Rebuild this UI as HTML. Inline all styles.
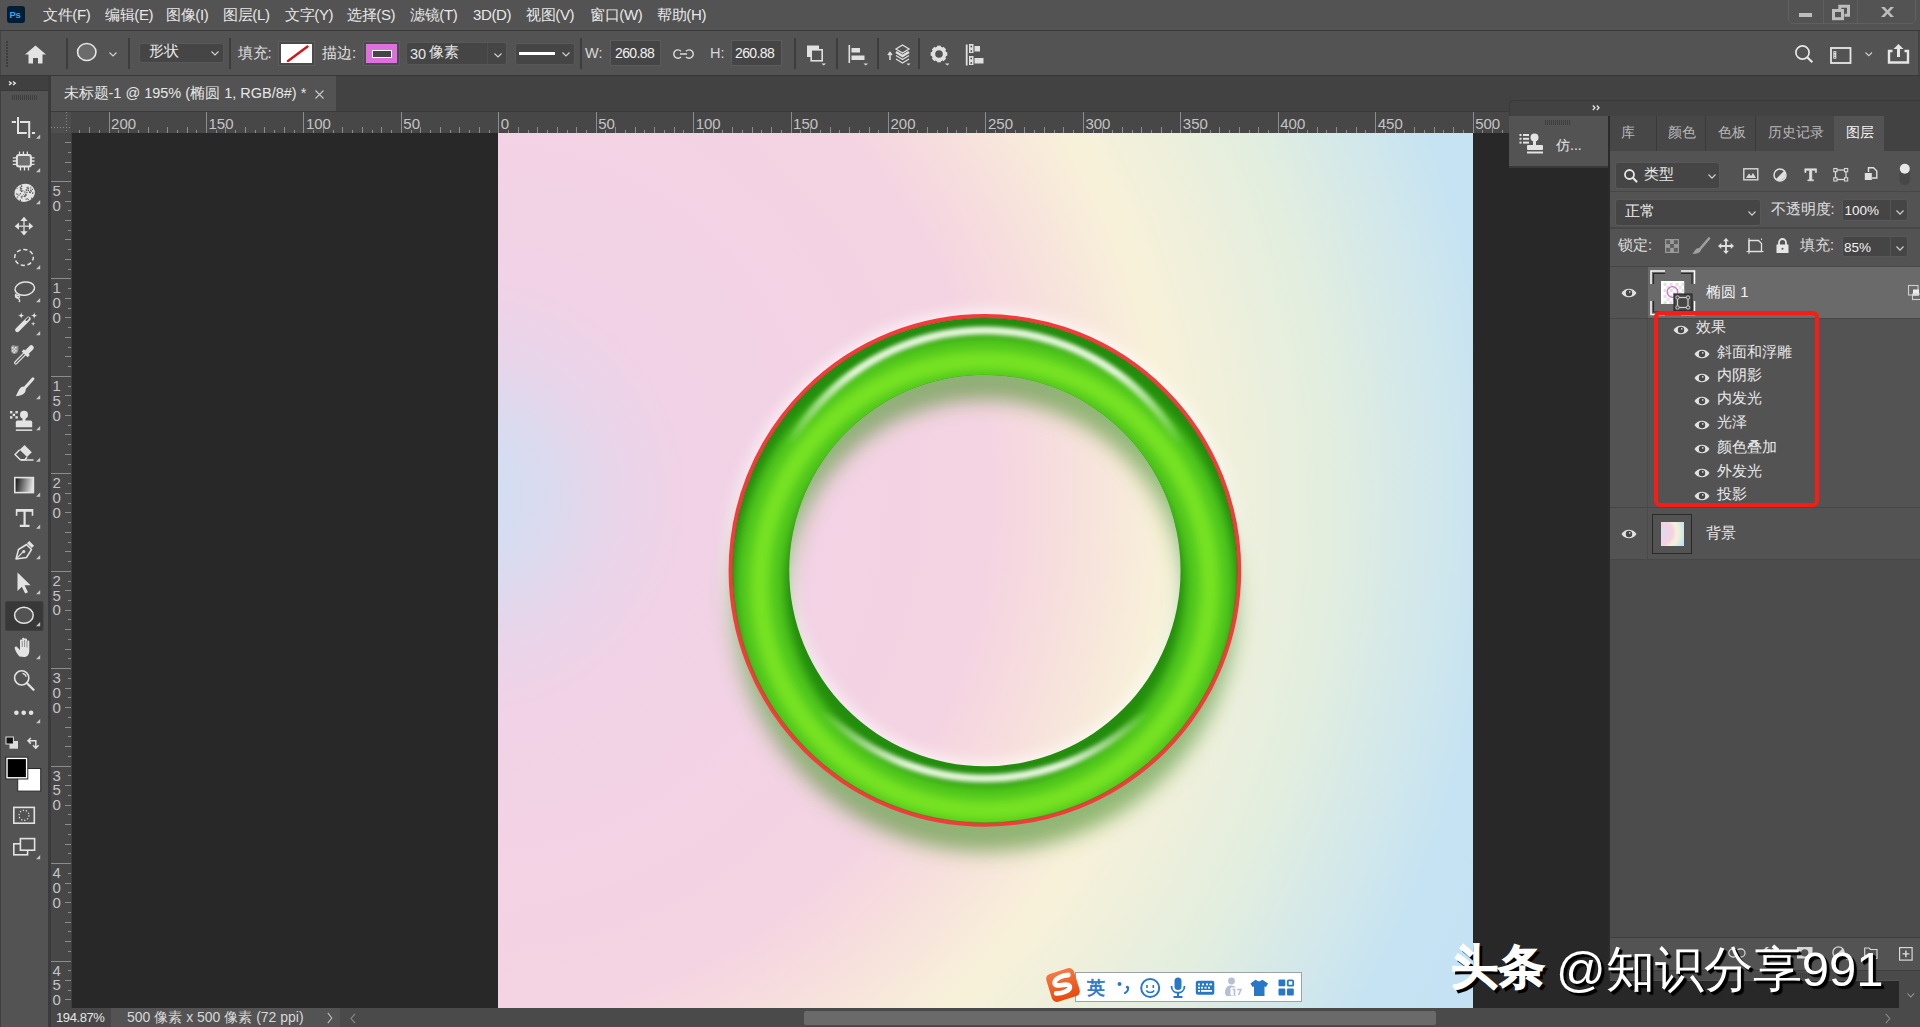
<!DOCTYPE html>
<html><head><meta charset="utf-8"><style>
*{margin:0;padding:0;box-sizing:border-box}
html,body{width:1920px;height:1027px;overflow:hidden;background:#282828;font-family:"Liberation Sans", sans-serif;color:#e6e6e6}
.a{position:absolute}
.t{position:absolute;white-space:nowrap;line-height:1}
svg.i{position:absolute;overflow:visible;left:0;top:0}
</style></head><body>

<div class="a" style="left:0px;top:0px;width:1920px;height:30px;background:#535353;"></div>
<div class="a" style="left:0px;top:30px;width:1920px;height:1px;background:#3a3a3a;"></div>
<div class="a" style="left:7px;top:6px;width:18px;height:17px;background:#001e36;border-radius:3px"></div>
<div class="t" style="left:9.5px;top:10px;font-size:9.5px;color:#31a8ff;font-weight:bold;letter-spacing:-0.3px">Ps</div>
<div class="t" style="left:43px;top:7px;font-size:15px;color:#e8e8e8;letter-spacing:-0.35px">文件(F)</div>
<div class="t" style="left:105px;top:7px;font-size:15px;color:#e8e8e8;letter-spacing:-0.35px">编辑(E)</div>
<div class="t" style="left:166px;top:7px;font-size:15px;color:#e8e8e8;letter-spacing:-0.35px">图像(I)</div>
<div class="t" style="left:223px;top:7px;font-size:15px;color:#e8e8e8;letter-spacing:-0.35px">图层(L)</div>
<div class="t" style="left:285px;top:7px;font-size:15px;color:#e8e8e8;letter-spacing:-0.35px">文字(Y)</div>
<div class="t" style="left:347px;top:7px;font-size:15px;color:#e8e8e8;letter-spacing:-0.35px">选择(S)</div>
<div class="t" style="left:410px;top:7px;font-size:15px;color:#e8e8e8;letter-spacing:-0.35px">滤镜(T)</div>
<div class="t" style="left:473px;top:7px;font-size:15px;color:#e8e8e8;letter-spacing:-0.35px">3D(D)</div>
<div class="t" style="left:526px;top:7px;font-size:15px;color:#e8e8e8;letter-spacing:-0.35px">视图(V)</div>
<div class="t" style="left:590px;top:7px;font-size:15px;color:#e8e8e8;letter-spacing:-0.35px">窗口(W)</div>
<div class="t" style="left:657px;top:7px;font-size:15px;color:#e8e8e8;letter-spacing:-0.35px">帮助(H)</div>
<div class="a" style="left:1788px;top:-3px;width:128px;height:27px;border:1px solid #5f5f5f;border-radius:0 0 5px 5px"></div>
<div class="a" style="left:1823px;top:0px;width:1px;height:24px;background:#5f5f5f;"></div>
<div class="a" style="left:1857px;top:0px;width:1px;height:24px;background:#5f5f5f;"></div>
<div class="a" style="left:1799px;top:13px;width:13px;height:4px;background:#bdbdbd;"></div>
<svg class="i" style="left:1830px;top:3px;" width="22" height="20" viewBox="0 0 22 20"><rect x="3.5" y="7.5" width="9" height="8.2" fill="none" stroke="#bdbdbd" stroke-width="3"/><path d="M9.8 6V3.3H18.5V12.3H14.5" fill="none" stroke="#bdbdbd" stroke-width="3"/></svg>
<svg class="i" style="left:1880px;top:6px;" width="16" height="12" viewBox="0 0 16 12"><path d="M1 1H4.6L7.5 4.3L10.4 1H14L9.3 6L14 11H10.4L7.5 7.7L4.6 11H1L5.7 6Z" fill="#bdbdbd"/></svg>
<div class="a" style="left:0px;top:31px;width:1920px;height:44px;background:#535353;"></div>
<div class="a" style="left:0px;top:31px;width:1px;height:44px;background:#454545;"></div>
<div class="a" style="left:1918px;top:31px;width:2px;height:44px;background:#454545;"></div>
<div class="a" style="left:0px;top:75px;width:1920px;height:1px;background:#383838;"></div>
<div class="a" style="left:6px;top:41px;width:2px;height:1.5px;background:#3c3c3c;"></div>
<div class="a" style="left:6px;top:44px;width:2px;height:1.5px;background:#3c3c3c;"></div>
<div class="a" style="left:6px;top:47px;width:2px;height:1.5px;background:#3c3c3c;"></div>
<div class="a" style="left:6px;top:50px;width:2px;height:1.5px;background:#3c3c3c;"></div>
<div class="a" style="left:6px;top:53px;width:2px;height:1.5px;background:#3c3c3c;"></div>
<div class="a" style="left:6px;top:56px;width:2px;height:1.5px;background:#3c3c3c;"></div>
<div class="a" style="left:6px;top:59px;width:2px;height:1.5px;background:#3c3c3c;"></div>
<div class="a" style="left:6px;top:62px;width:2px;height:1.5px;background:#3c3c3c;"></div>
<div class="a" style="left:6px;top:65px;width:2px;height:1.5px;background:#3c3c3c;"></div>
<svg class="i" style="left:25px;top:45px;" width="22" height="19" viewBox="0 0 22 19"><path d="M10.5 0.5L21 9.5H17.5V18.5H13V13H8V18.5H3.5V9.5H0Z" fill="#e3e3e3"/></svg>
<div class="a" style="left:66px;top:38px;width:1.5px;height:31px;background:#3d3d3d;"></div>
<div class="a" style="left:128px;top:38px;width:1.5px;height:31px;background:#3d3d3d;"></div>
<div class="a" style="left:229px;top:38px;width:1.5px;height:31px;background:#3d3d3d;"></div>
<div class="a" style="left:580px;top:38px;width:1.5px;height:31px;background:#3d3d3d;"></div>
<div class="a" style="left:794px;top:38px;width:1.5px;height:31px;background:#3d3d3d;"></div>
<div class="a" style="left:836px;top:38px;width:1.5px;height:31px;background:#3d3d3d;"></div>
<div class="a" style="left:877px;top:38px;width:1.5px;height:31px;background:#3d3d3d;"></div>
<div class="a" style="left:918px;top:38px;width:1.5px;height:31px;background:#3d3d3d;"></div>
<svg class="i" style="left:76px;top:42px;" width="22" height="21" viewBox="0 0 22 21"><ellipse cx="10.75" cy="10" rx="9.2" ry="8.5" fill="#6b6b6b" stroke="#e6e6e6" stroke-width="1.6"/></svg>
<svg class="i" style="left:109px;top:52.3px;" width="8" height="4.5" viewBox="0 0 8 4.5"><path d="M0.5 0.5L4.0 4.0L7.5 0.5" fill="none" stroke="#d0d0d0" stroke-width="1.2"/></svg>
<div class="a" style="left:138.5px;top:42.5px;width:85px;height:20px;background:#454545;border:1px solid #585858;border-radius:3px"></div>
<div class="t" style="left:148.5px;top:43px;font-size:15px;color:#e8e8e8;">形状</div>
<svg class="i" style="left:211px;top:51px;" width="8" height="4.5" viewBox="0 0 8 4.5"><path d="M0.5 0.5L4.0 4.0L7.5 0.5" fill="none" stroke="#d0d0d0" stroke-width="1.2"/></svg>
<div class="t" style="left:237.5px;top:44.5px;font-size:15px;color:#e0e0e0;">填充:</div>
<div class="a" style="left:278px;top:41px;width:37px;height:24.5px;border:1px solid #5d5d5d;background:#4a4a4a"></div>
<div class="a" style="left:280.5px;top:43.5px;width:31.5px;height:19.5px;background:#ffffff;"></div>
<svg class="i" style="left:280.5px;top:43.5px;" width="32" height="20" viewBox="0 0 32 20"><path d="M7 17L26.5 2.5" stroke="#d01818" stroke-width="2.4" stroke-linecap="round"/></svg>
<div class="t" style="left:322px;top:44.5px;font-size:15px;color:#e0e0e0;">描边:</div>
<div class="a" style="left:363px;top:41px;width:37px;height:24.5px;border:1px solid #5d5d5d;background:#4a4a4a"></div>
<div class="a" style="left:365.5px;top:43.5px;width:31.5px;height:19.5px;background:#dd70dd;"></div>
<div class="a" style="left:371.5px;top:49.5px;width:20px;height:8px;border:1.6px solid #ffffff;background:#454545"></div>
<div class="a" style="left:405.5px;top:42px;width:101px;height:23px;background:#454545;border:1px solid #585858;border-radius:3px"></div>
<div class="a" style="left:487px;top:43px;width:1px;height:21px;background:#4f4f4f;"></div>
<div class="t" style="left:410px;top:47px;font-size:14.5px;color:#e8e8e8;">30</div>
<div class="t" style="left:429px;top:44px;font-size:15px;color:#e8e8e8;">像素</div>
<svg class="i" style="left:494px;top:52.5px;" width="8" height="4.5" viewBox="0 0 8 4.5"><path d="M0.5 0.5L4.0 4.0L7.5 0.5" fill="none" stroke="#d0d0d0" stroke-width="1.2"/></svg>
<div class="a" style="left:514.5px;top:42.5px;width:60px;height:22px;background:#454545;border:1px solid #585858;border-radius:3px"></div>
<div class="a" style="left:518.5px;top:51.8px;width:36.5px;height:3.5px;background:#ffffff;"></div>
<svg class="i" style="left:562px;top:51.5px;" width="8" height="4.5" viewBox="0 0 8 4.5"><path d="M0.5 0.5L4.0 4.0L7.5 0.5" fill="none" stroke="#d0d0d0" stroke-width="1.2"/></svg>
<div class="t" style="left:585px;top:45.5px;font-size:14.5px;color:#d8d8d8;">W:</div>
<div class="a" style="left:610px;top:40px;width:51px;height:25.5px;background:#454545;border:1px solid #5c5c5c"></div>
<div class="t" style="left:615px;top:46px;font-size:14px;color:#f0f0f0;letter-spacing:-0.6px">260.88</div>
<svg class="i" style="left:674px;top:48.5px;" width="19" height="10" viewBox="0 0 19 10"><path d="M7 2.2A4.2 4.2 0 1 0 7 8M12 2.2A4.2 4.2 0 1 1 12 8M6 5H13" fill="none" stroke="#dcdcdc" stroke-width="1.4"/></svg>
<div class="t" style="left:710px;top:45.5px;font-size:14.5px;color:#d8d8d8;">H:</div>
<div class="a" style="left:731px;top:40px;width:51px;height:25.5px;background:#454545;border:1px solid #5c5c5c"></div>
<div class="t" style="left:735px;top:46px;font-size:14px;color:#f0f0f0;letter-spacing:-0.6px">260.88</div>
<svg class="i" style="left:806px;top:45px;" width="22" height="22" viewBox="0 0 22 22"><rect x="1" y="0.5" width="12" height="11.5" fill="#e0e0e0"/><rect x="5.2" y="4.8" width="11" height="11" fill="#535353" stroke="#e0e0e0" stroke-width="1.6"/><path d="M15.5 18.5H20L17.75 20.5Z" fill="#e0e0e0"/></svg>
<svg class="i" style="left:848px;top:45px;" width="22" height="22" viewBox="0 0 22 22"><rect x="0.5" y="0" width="1.6" height="18" fill="#e0e0e0"/><rect x="3.5" y="3" width="8.5" height="4.5" fill="#e0e0e0"/><rect x="3.5" y="10.5" width="13" height="4.5" fill="#e0e0e0"/><path d="M15.5 18.5H20L17.75 20.5Z" fill="#e0e0e0"/></svg>
<svg class="i" style="left:886px;top:43.5px;" width="26" height="24" viewBox="0 0 26 24"><path d="M4 16V9M2 11L4 8.5L6 11" stroke="#e0e0e0" stroke-width="1.5" fill="none"/><path d="M16.5 1L23 5L16.5 9L10 5Z" fill="none" stroke="#e0e0e0" stroke-width="1.3"/><path d="M10 8L16.5 12L23 8" fill="none" stroke="#e0e0e0" stroke-width="2.5"/><path d="M10 11.5L16.5 15.5L23 11.5" fill="none" stroke="#e0e0e0" stroke-width="1.3"/><path d="M10 15L16.5 19L23 15" fill="none" stroke="#e0e0e0" stroke-width="1.3"/><path d="M20.5 19.5H24.5L22.5 21.5Z" fill="#e0e0e0"/></svg>
<svg class="i" style="left:939px;top:54px;left:939px;top:54px" width="20" height="20" viewBox="0 0 20 20"><g transform="translate(0,0)"><rect x="-1.9" y="-8.3" width="3.8" height="4" fill="#e0e0e0" transform="rotate(0)"/><rect x="-1.9" y="-8.3" width="3.8" height="4" fill="#e0e0e0" transform="rotate(45)"/><rect x="-1.9" y="-8.3" width="3.8" height="4" fill="#e0e0e0" transform="rotate(90)"/><rect x="-1.9" y="-8.3" width="3.8" height="4" fill="#e0e0e0" transform="rotate(135)"/><rect x="-1.9" y="-8.3" width="3.8" height="4" fill="#e0e0e0" transform="rotate(180)"/><rect x="-1.9" y="-8.3" width="3.8" height="4" fill="#e0e0e0" transform="rotate(225)"/><rect x="-1.9" y="-8.3" width="3.8" height="4" fill="#e0e0e0" transform="rotate(270)"/><rect x="-1.9" y="-8.3" width="3.8" height="4" fill="#e0e0e0" transform="rotate(315)"/><circle cx="0" cy="0" r="5.6" fill="none" stroke="#e0e0e0" stroke-width="3.6"/><path d="M6 9.5H10.5L8.25 11.5Z" fill="#e0e0e0"/></g></svg>
<svg class="i" style="left:965px;top:43.5px;" width="22" height="23" viewBox="0 0 22 23"><rect x="0.8" y="0.5" width="1.8" height="21" fill="#e0e0e0"/><rect x="4" y="0" width="4.5" height="9" fill="#e0e0e0"/><rect x="4" y="12" width="4.5" height="9" fill="#e0e0e0"/><circle cx="6.25" cy="2.5" r="0.9" fill="#535353"/><circle cx="6.25" cy="7" r="0.9" fill="#535353"/><circle cx="6.25" cy="14.5" r="0.9" fill="#535353"/><circle cx="6.25" cy="19" r="0.9" fill="#535353"/><rect x="9.5" y="2" width="5.5" height="5.5" fill="#e0e0e0"/><rect x="9.5" y="14" width="9" height="5.5" fill="#e0e0e0"/></svg>
<svg class="i" style="left:1795px;top:45px;" width="20" height="20" viewBox="0 0 20 20"><circle cx="7.5" cy="7.5" r="6.6" fill="none" stroke="#e6e6e6" stroke-width="1.7"/><path d="M12.2 12.2L17.3 17.3" stroke="#e6e6e6" stroke-width="2.2"/></svg>
<svg class="i" style="left:1830px;top:46.5px;" width="22" height="18" viewBox="0 0 22 18"><rect x="1" y="1" width="19.5" height="15" fill="none" stroke="#e6e6e6" stroke-width="1.8"/><rect x="3.3" y="4.2" width="3" height="7.5" fill="#e6e6e6"/><circle cx="4.8" cy="5.6" r="0.6" fill="#535353"/><circle cx="4.8" cy="8" r="0.6" fill="#535353"/><circle cx="4.8" cy="10.3" r="0.6" fill="#535353"/></svg>
<svg class="i" style="left:1864.5px;top:51.8px;" width="7.5" height="4.2" viewBox="0 0 7.5 4.2"><path d="M0.5 0.5L3.75 3.7L7.0 0.5" fill="none" stroke="#cfcfcf" stroke-width="1.1"/></svg>
<svg class="i" style="left:1888px;top:43px;" width="22" height="21" viewBox="0 0 22 21"><path d="M4.5 8H1V19.5H20V8H16.5" fill="none" stroke="#e6e6e6" stroke-width="2.4"/><path d="M10.5 1L15.5 6H12V14H9V6H5.5Z" fill="#e6e6e6"/></svg>
<div class="a" style="left:0px;top:76px;width:1920px;height:35px;background:#424242;"></div>
<div class="a" style="left:0px;top:76px;width:48px;height:14px;background:#404040;"></div>
<div class="a" style="left:0px;top:90px;width:48px;height:1px;background:#393939;"></div>
<div class="a" style="left:0px;top:91px;width:48px;height:936px;background:#535353;"></div>
<div class="a" style="left:0px;top:91px;width:1px;height:936px;background:#3f3f3f;"></div>
<div class="a" style="left:48px;top:76px;width:3px;height:951px;background:#3b3b3b;"></div>
<div class="a" style="left:12px;top:95px;width:1px;height:5px;background:#3e3e3e;"></div>
<div class="a" style="left:14px;top:95px;width:1px;height:5px;background:#3e3e3e;"></div>
<div class="a" style="left:16px;top:95px;width:1px;height:5px;background:#3e3e3e;"></div>
<div class="a" style="left:18px;top:95px;width:1px;height:5px;background:#3e3e3e;"></div>
<div class="a" style="left:20px;top:95px;width:1px;height:5px;background:#3e3e3e;"></div>
<div class="a" style="left:22px;top:95px;width:1px;height:5px;background:#3e3e3e;"></div>
<div class="a" style="left:24px;top:95px;width:1px;height:5px;background:#3e3e3e;"></div>
<div class="a" style="left:26px;top:95px;width:1px;height:5px;background:#3e3e3e;"></div>
<div class="a" style="left:28px;top:95px;width:1px;height:5px;background:#3e3e3e;"></div>
<div class="a" style="left:30px;top:95px;width:1px;height:5px;background:#3e3e3e;"></div>
<div class="a" style="left:32px;top:95px;width:1px;height:5px;background:#3e3e3e;"></div>
<div class="a" style="left:34px;top:95px;width:1px;height:5px;background:#3e3e3e;"></div>
<div class="a" style="left:36px;top:95px;width:1px;height:5px;background:#3e3e3e;"></div>
<svg class="i" style="left:0;top:0" width="48" height="1027" viewBox="0 0 48 1027"><path d="M9 81.5L11.3 83.3L9 85.1M13 81.5L15.3 83.3L13 85.1" fill="none" stroke="#e6e6e6" stroke-width="1.3"/><g stroke="#e3e3e3" stroke-width="2" fill="none"><path d="M11.8 122H16M18 117V133H26.8M20 122H29.2V138M31.9 133H35"/></g><path d="M40.2 134.5V138.7H36Z" fill="#c8c8c8"/><rect x="16.9" y="155" width="14" height="11.4" rx="2.2" fill="#6e6e6e" stroke="#e3e3e3" stroke-width="2"/><path d="M19.5 151.5V155M23.4 151.5V155M27.3 151.5V155M20.5 166.5V170.5M24.5 166.5V170.5M28.5 166.5V170.5M12.8 157.8H16.9M12.8 161H16.9M12.8 164.3H16.9M30.9 157.8H34.5M30.9 161H34.5M30.9 164.3H34.5" stroke="#e3e3e3" stroke-width="1.3"/><path d="M40.2 168V172.2H36Z" fill="#c8c8c8"/><clipPath id="osc"><ellipse cx="24.7" cy="192.8" rx="10.4" ry="9" transform="rotate(-12 24.7 192.8)"/></clipPath><ellipse cx="24.7" cy="192.8" rx="10.4" ry="9" transform="rotate(-12 24.7 192.8)" fill="#e3e3e3"/><g clip-path="url(#osc)"><circle cx="20.4" cy="193.7" r="0.58" fill="#535353"/><circle cx="26.5" cy="194.9" r="0.47" fill="#535353"/><circle cx="16.7" cy="198.1" r="0.54" fill="#535353"/><circle cx="20.4" cy="200.4" r="0.61" fill="#535353"/><circle cx="30.3" cy="192.6" r="0.67" fill="#535353"/><circle cx="19.0" cy="195.0" r="0.75" fill="#535353"/><circle cx="25.1" cy="196.6" r="0.68" fill="#535353"/><circle cx="17.6" cy="196.9" r="0.66" fill="#535353"/><circle cx="21.5" cy="186.0" r="0.75" fill="#535353"/><circle cx="24.3" cy="196.3" r="0.76" fill="#535353"/><circle cx="28.3" cy="199.3" r="0.59" fill="#535353"/><circle cx="29.7" cy="192.2" r="0.78" fill="#535353"/><circle cx="31.0" cy="187.0" r="0.50" fill="#535353"/><circle cx="20.1" cy="200.0" r="0.60" fill="#535353"/><circle cx="26.8" cy="190.0" r="0.63" fill="#535353"/><circle cx="22.9" cy="190.8" r="0.65" fill="#535353"/><circle cx="26.1" cy="199.1" r="0.69" fill="#535353"/><circle cx="31.8" cy="198.3" r="0.80" fill="#535353"/><circle cx="27.6" cy="187.9" r="0.75" fill="#535353"/><circle cx="32.4" cy="199.1" r="0.65" fill="#535353"/><circle cx="28.3" cy="188.7" r="0.74" fill="#535353"/><circle cx="26.0" cy="189.8" r="0.47" fill="#535353"/><circle cx="30.6" cy="200.3" r="0.48" fill="#535353"/><circle cx="29.7" cy="191.7" r="0.50" fill="#535353"/><circle cx="21.3" cy="197.0" r="0.76" fill="#535353"/><circle cx="17.2" cy="194.7" r="0.47" fill="#535353"/><circle cx="28.4" cy="190.5" r="0.76" fill="#535353"/><circle cx="32.7" cy="193.1" r="0.80" fill="#535353"/><circle cx="21.6" cy="186.7" r="0.66" fill="#535353"/><circle cx="17.0" cy="188.5" r="0.59" fill="#535353"/><circle cx="26.6" cy="187.8" r="0.46" fill="#535353"/><circle cx="30.8" cy="190.2" r="0.79" fill="#535353"/><circle cx="31.3" cy="191.2" r="0.61" fill="#535353"/><circle cx="25.1" cy="195.2" r="0.66" fill="#535353"/><circle cx="25.7" cy="194.8" r="0.78" fill="#535353"/><circle cx="24.9" cy="192.0" r="0.70" fill="#535353"/><circle cx="20.4" cy="190.0" r="0.79" fill="#535353"/><circle cx="25.1" cy="193.7" r="0.45" fill="#535353"/><circle cx="23.4" cy="194.2" r="0.46" fill="#535353"/><circle cx="26.7" cy="195.0" r="0.47" fill="#535353"/><circle cx="26.9" cy="192.5" r="0.69" fill="#535353"/><circle cx="22.3" cy="196.1" r="0.71" fill="#535353"/><circle cx="16.9" cy="186.4" r="0.69" fill="#535353"/><circle cx="32.4" cy="189.3" r="0.61" fill="#535353"/><circle cx="26.3" cy="190.3" r="0.58" fill="#535353"/><circle cx="21.7" cy="191.0" r="0.66" fill="#535353"/><circle cx="21.5" cy="191.2" r="0.72" fill="#535353"/><circle cx="16.9" cy="194.0" r="0.71" fill="#535353"/><circle cx="21.6" cy="188.8" r="0.73" fill="#535353"/><circle cx="20.4" cy="188.3" r="0.60" fill="#535353"/><circle cx="28.0" cy="187.0" r="0.56" fill="#535353"/><circle cx="22.0" cy="198.0" r="0.60" fill="#535353"/><circle cx="30.6" cy="188.0" r="0.57" fill="#535353"/><circle cx="27.2" cy="198.8" r="0.61" fill="#535353"/><circle cx="20.2" cy="187.3" r="0.64" fill="#535353"/></g><path d="M40.2 200V204.2H36Z" fill="#c8c8c8"/><path d="M24 219V233M17 226.2H31" stroke="#c9c9c9" stroke-width="1.6"/><path d="M24 216.7L27.6 221H20.4ZM24 235.6L27.6 231.3H20.4ZM14.7 226.2L19 222.6V229.8ZM33.2 226.2L28.9 222.6V229.8Z" fill="#e3e3e3"/><ellipse cx="24" cy="257.4" rx="9.3" ry="8" fill="none" stroke="#e3e3e3" stroke-width="1.5" stroke-dasharray="4.2 2.6" stroke-dashoffset="1"/><path d="M40.2 265V269.2H36Z" fill="#c8c8c8"/><ellipse cx="24.8" cy="288.6" rx="9.8" ry="6.6" fill="none" stroke="#e3e3e3" stroke-width="1.5" transform="rotate(-8 24.8 288.6)"/><path d="M16.5 293.5C14 296 16 298.5 18.5 297.8C20.5 297 19 294.5 17 295.5C15.5 296.5 18.5 298.5 19.3 299.6C20 300.5 19.5 301.5 19 302" fill="none" stroke="#e3e3e3" stroke-width="1.4"/><path d="M40.2 298V302.2H36Z" fill="#c8c8c8"/><path d="M17.3 330L28.5 318.8" stroke="#e3e3e3" stroke-width="4.4" stroke-linecap="round"/><path d="M26.4 320.1L28.3 318.2" stroke="#535353" stroke-width="1.8" stroke-linecap="round"/><path d="M21.2 311.9Q21.2 315.4 24.7 315.4Q21.2 315.4 21.2 318.9Q21.2 315.4 17.7 315.4Q21.2 315.4 21.2 311.9Z" fill="#e3e3e3"/><path d="M34.2 311.9Q34.2 315.4 37.7 315.4Q34.2 315.4 34.2 318.9Q34.2 315.4 30.700000000000003 315.4Q34.2 315.4 34.2 311.9Z" fill="#e3e3e3"/><path d="M33.2 321.4Q33.2 323.7 35.5 323.7Q33.2 323.7 33.2 326.0Q33.2 323.7 30.900000000000002 323.7Q33.2 323.7 33.2 321.4Z" fill="#e3e3e3"/><path d="M40.2 331V335.2H36Z" fill="#c8c8c8"/><path d="M11 346.5L13 345L16 346L18.3 345.5V350C18.3 352.5 16 354 14 354C12 353.5 11 352 11 350Z" fill="#9a9a9a"/><g fill="#e3e3e3"><rect x="12" y="347" width="1.5" height="1.5"/><rect x="15" y="347" width="1.5" height="1.5"/><rect x="13.5" y="348.5" width="1.5" height="1.5"/><rect x="12" y="350" width="1.5" height="1.5"/><rect x="15" y="350" width="1.5" height="1.5"/><rect x="13.5" y="351.5" width="1.5" height="1.5"/></g><path d="M15.8 362.8L25.5 353" stroke="#e3e3e3" stroke-width="3.6" stroke-linecap="round"/><path d="M15.8 362.8L25.5 353" stroke="#535353" stroke-width="1.2" stroke-linecap="round"/><path d="M22.8 350.3L28.7 356.2" stroke="#e3e3e3" stroke-width="3.2"/><path d="M27 352L31.3 347.7" stroke="#e3e3e3" stroke-width="5" stroke-linecap="round"/><path d="M33 378.8L24.5 388.3" stroke="#e3e3e3" stroke-width="2.8" stroke-linecap="round"/><path d="M23.6 386.5C19.6 386.7 18.8 390.5 15.8 396.3C20 396 25.5 394.5 25.8 389.5Z" fill="#e3e3e3"/><path d="M40.2 395V399.2H36Z" fill="#c8c8c8"/><g fill="#e3e3e3"><rect x="10" y="411" width="2.4" height="2.4"/><rect x="15.4" y="411" width="2.4" height="2.4"/><rect x="12.7" y="413.7" width="2.4" height="2.4"/><rect x="10" y="416.2" width="2.4" height="2.4"/><rect x="15.4" y="416.2" width="2.4" height="2.4"/><circle cx="24" cy="414.8" r="4"/><rect x="22.5" y="417.5" width="3" height="4"/><path d="M17.5 420.5H30.5Q32.2 420.5 32.2 422.3V427.3H15.8V422.3Q15.8 420.5 17.5 420.5Z"/><rect x="15.8" y="429.4" width="16.4" height="1.5"/></g><path d="M40.2 426V430.2H36Z" fill="#c8c8c8"/><path d="M24.5 445L31.8 452.3L27 457L19.7 449.8Z" fill="#e3e3e3"/><path d="M19.7 449.8L15 454.5L20.3 459.8H25L27 457" fill="none" stroke="#e3e3e3" stroke-width="1.5" stroke-linejoin="round"/><path d="M21 460H33.5" stroke="#e3e3e3" stroke-width="1.5"/><path d="M40.2 457.5V461.7H36Z" fill="#c8c8c8"/><defs><linearGradient id="gr" x1="0" x2="1" y1="0" y2="0.15"><stop offset="0" stop-color="#0a0a0a"/><stop offset="1" stop-color="#dedede"/></linearGradient></defs><rect x="14.8" y="477.6" width="18.6" height="15" fill="url(#gr)" stroke="#e3e3e3" stroke-width="1.6"/><path d="M40.2 492.5V496.7H36Z" fill="#c8c8c8"/><path d="M16.6 515.8V509.8H32.5V515.8" fill="none" stroke="#e3e3e3" stroke-width="1.6"/><path d="M16.6 510.5H32.5" stroke="#e3e3e3" stroke-width="2.6"/><path d="M24.6 510V526M19.8 525.8H29.5" stroke="#e3e3e3" stroke-width="2.2"/><path d="M40.2 524.5V528.7H36Z" fill="#c8c8c8"/><path d="M16 559L18.5 549.5L26.5 544.5L31.5 549.5L26.5 557.5Z" fill="none" stroke="#e3e3e3" stroke-width="1.5" stroke-linejoin="round"/><path d="M27 543.2L29.3 541L34.1 545.8L31.8 548.1Z" fill="#e3e3e3"/><path d="M16.5 558.5L23.3 551.7" stroke="#e3e3e3" stroke-width="1.1"/><circle cx="23.8" cy="551.4" r="1.5" fill="#e3e3e3"/><path d="M40.2 555V559.2H36Z" fill="#c8c8c8"/><path d="M17.5 572.5V591L21.8 586.8L25.2 593.6L28 592.2L24.6 585.3H30.6Z" fill="#e3e3e3"/><path d="M40.2 590V594.2H36Z" fill="#c8c8c8"/><rect x="5.5" y="601.5" width="37.5" height="29" rx="1.5" fill="#383838" stroke="#3f3f3f" stroke-width="1"/><ellipse cx="23.9" cy="615.3" rx="9.3" ry="8" fill="#535353" stroke="#e3e3e3" stroke-width="1.5"/><path d="M40.2 622V626.2H36Z" fill="#c8c8c8"/><path d="M19.5 656.5C17 654 15.5 651 14.8 648.5C14.3 647 15.8 646 17 647L20 650V640.5C20 639 22.2 639 22.2 640.5V647.5V638.8C22.2 637.5 24.6 637.5 24.6 638.8V647.5V639.5C24.6 638.2 27 638.2 27 639.5V648V641.5C27 640.2 29.3 640.2 29.3 641.5V650.5C29.3 654.5 27.5 657 24 657Z" fill="#e3e3e3"/><path d="M22.2 641V647M24.6 640V647M27 641V647.5" stroke="#535353" stroke-width="0.6"/><path d="M40.2 655V659.2H36Z" fill="#c8c8c8"/><circle cx="21.7" cy="677.9" r="7.1" fill="none" stroke="#e3e3e3" stroke-width="1.6"/><path d="M26.8 683L33.5 689.7" stroke="#e3e3e3" stroke-width="2.3" stroke-linecap="round"/><path d="M22.5 673.3A4.5 4.5 0 0 1 26.2 676.8" fill="none" stroke="#e3e3e3" stroke-width="1.2"/><circle cx="16.4" cy="712.8" r="2.3" fill="#e3e3e3"/><circle cx="23.7" cy="712.8" r="2.3" fill="#e3e3e3"/><circle cx="31.1" cy="712.8" r="2.3" fill="#e3e3e3"/><path d="M40.2 719V723.2H36Z" fill="#c8c8c8"/><rect x="9.5" y="741" width="8.5" height="7.7" fill="#dedede"/><rect x="6" y="737" width="7.4" height="7" fill="#111" stroke="#dedede" stroke-width="1"/><path d="M28.5 740.8H35.8V748M30.8 738L28 740.8L30.8 743.6M33 745.3L35.8 748.2L38.6 745.3" fill="none" stroke="#e3e3e3" stroke-width="1.5"/><rect x="17.7" y="768.5" width="23" height="22.6" fill="#ffffff" stroke="#2a2a2a" stroke-width="1"/><rect x="5.8" y="757.2" width="22" height="21.8" fill="#000" stroke="#2a2a2a" stroke-width="1"/><rect x="7" y="758.4" width="19.6" height="19.4" fill="#000" stroke="#ffffff" stroke-width="1.4"/><rect x="13.8" y="807.4" width="20.5" height="15.8" fill="none" stroke="#e3e3e3" stroke-width="1.6"/><circle cx="24" cy="815.3" r="5" fill="none" stroke="#e3e3e3" stroke-width="1.2" stroke-dasharray="1.3 1.8"/><rect x="13.8" y="843.8" width="13.8" height="11" fill="#535353" stroke="#e3e3e3" stroke-width="1.6"/><rect x="20.4" y="838.6" width="14.2" height="11.6" fill="#535353" stroke="#e3e3e3" stroke-width="1.6"/><path d="M40.2 855V859.2H36Z" fill="#c8c8c8"/></svg>
<div class="a" style="left:51px;top:76px;width:285px;height:35px;background:#535353;"></div>
<div class="t" style="left:63.5px;top:86px;font-size:14.5px;color:#e6e6e6;">未标题-1 @ 195% (椭圆 1, RGB/8#) *</div>
<svg class="i" style="left:315px;top:90px;" width="9" height="9" viewBox="0 0 9 9"><path d="M0.5 0.5L8.5 8.5M8.5 0.5L0.5 8.5" stroke="#c8c8c8" stroke-width="1.1"/></svg>
<div class="a" style="left:51px;top:111px;width:1869px;height:1px;background:#3b3b3b;"></div>
<div class="a" style="left:51px;top:112px;width:1458px;height:21px;background:#474747;"></div>
<div class="a" style="left:51px;top:112px;width:20px;height:21px;background:#4e4e4e;"></div>
<svg class="i" style="left:51px;top:112px;" width="20" height="21" viewBox="0 0 20 21"><path d="M15.5 0V21" stroke="#8a8a8a" stroke-width="1" stroke-dasharray="1 2"/><path d="M0 15.5H20" stroke="#8a8a8a" stroke-width="1" stroke-dasharray="1 2"/></svg>
<div class="a" style="left:51px;top:133px;width:20px;height:875px;background:#474747;"></div>
<div class="a" style="left:71px;top:133px;width:1px;height:875px;background:#3e3e3e;"></div>
<svg class="i" style="left:72px;top:112px;" width="1436" height="21" viewBox="0 0 1436 21"><rect x="7" y="18" width="1" height="3" fill="#8c8c8c"/><rect x="17" y="15" width="1" height="6" fill="#8c8c8c"/><rect x="27" y="18" width="1" height="3" fill="#8c8c8c"/><rect x="37" y="0" width="1" height="21" fill="#8c8c8c"/><rect x="46" y="18" width="1" height="3" fill="#8c8c8c"/><rect x="56" y="15" width="1" height="6" fill="#8c8c8c"/><rect x="66" y="18" width="1" height="3" fill="#8c8c8c"/><rect x="76" y="15" width="1" height="6" fill="#8c8c8c"/><rect x="85" y="18" width="1" height="3" fill="#8c8c8c"/><rect x="95" y="15" width="1" height="6" fill="#8c8c8c"/><rect x="105" y="18" width="1" height="3" fill="#8c8c8c"/><rect x="115" y="15" width="1" height="6" fill="#8c8c8c"/><rect x="124" y="18" width="1" height="3" fill="#8c8c8c"/><rect x="134" y="0" width="1" height="21" fill="#8c8c8c"/><rect x="144" y="18" width="1" height="3" fill="#8c8c8c"/><rect x="153" y="15" width="1" height="6" fill="#8c8c8c"/><rect x="163" y="18" width="1" height="3" fill="#8c8c8c"/><rect x="173" y="15" width="1" height="6" fill="#8c8c8c"/><rect x="183" y="18" width="1" height="3" fill="#8c8c8c"/><rect x="192" y="15" width="1" height="6" fill="#8c8c8c"/><rect x="202" y="18" width="1" height="3" fill="#8c8c8c"/><rect x="212" y="15" width="1" height="6" fill="#8c8c8c"/><rect x="222" y="18" width="1" height="3" fill="#8c8c8c"/><rect x="231" y="0" width="1" height="21" fill="#8c8c8c"/><rect x="241" y="18" width="1" height="3" fill="#8c8c8c"/><rect x="251" y="15" width="1" height="6" fill="#8c8c8c"/><rect x="261" y="18" width="1" height="3" fill="#8c8c8c"/><rect x="270" y="15" width="1" height="6" fill="#8c8c8c"/><rect x="280" y="18" width="1" height="3" fill="#8c8c8c"/><rect x="290" y="15" width="1" height="6" fill="#8c8c8c"/><rect x="300" y="18" width="1" height="3" fill="#8c8c8c"/><rect x="309" y="15" width="1" height="6" fill="#8c8c8c"/><rect x="319" y="18" width="1" height="3" fill="#8c8c8c"/><rect x="329" y="0" width="1" height="21" fill="#8c8c8c"/><rect x="339" y="18" width="1" height="3" fill="#8c8c8c"/><rect x="348" y="15" width="1" height="6" fill="#8c8c8c"/><rect x="358" y="18" width="1" height="3" fill="#8c8c8c"/><rect x="368" y="15" width="1" height="6" fill="#8c8c8c"/><rect x="378" y="18" width="1" height="3" fill="#8c8c8c"/><rect x="387" y="15" width="1" height="6" fill="#8c8c8c"/><rect x="397" y="18" width="1" height="3" fill="#8c8c8c"/><rect x="407" y="15" width="1" height="6" fill="#8c8c8c"/><rect x="417" y="18" width="1" height="3" fill="#8c8c8c"/><rect x="426" y="0" width="1" height="21" fill="#8c8c8c"/><rect x="436" y="18" width="1" height="3" fill="#8c8c8c"/><rect x="446" y="15" width="1" height="6" fill="#8c8c8c"/><rect x="456" y="18" width="1" height="3" fill="#8c8c8c"/><rect x="465" y="15" width="1" height="6" fill="#8c8c8c"/><rect x="475" y="18" width="1" height="3" fill="#8c8c8c"/><rect x="485" y="15" width="1" height="6" fill="#8c8c8c"/><rect x="495" y="18" width="1" height="3" fill="#8c8c8c"/><rect x="504" y="15" width="1" height="6" fill="#8c8c8c"/><rect x="514" y="18" width="1" height="3" fill="#8c8c8c"/><rect x="524" y="0" width="1" height="21" fill="#8c8c8c"/><rect x="533" y="18" width="1" height="3" fill="#8c8c8c"/><rect x="543" y="15" width="1" height="6" fill="#8c8c8c"/><rect x="553" y="18" width="1" height="3" fill="#8c8c8c"/><rect x="563" y="15" width="1" height="6" fill="#8c8c8c"/><rect x="572" y="18" width="1" height="3" fill="#8c8c8c"/><rect x="582" y="15" width="1" height="6" fill="#8c8c8c"/><rect x="592" y="18" width="1" height="3" fill="#8c8c8c"/><rect x="602" y="15" width="1" height="6" fill="#8c8c8c"/><rect x="611" y="18" width="1" height="3" fill="#8c8c8c"/><rect x="621" y="0" width="1" height="21" fill="#8c8c8c"/><rect x="631" y="18" width="1" height="3" fill="#8c8c8c"/><rect x="641" y="15" width="1" height="6" fill="#8c8c8c"/><rect x="650" y="18" width="1" height="3" fill="#8c8c8c"/><rect x="660" y="15" width="1" height="6" fill="#8c8c8c"/><rect x="670" y="18" width="1" height="3" fill="#8c8c8c"/><rect x="680" y="15" width="1" height="6" fill="#8c8c8c"/><rect x="689" y="18" width="1" height="3" fill="#8c8c8c"/><rect x="699" y="15" width="1" height="6" fill="#8c8c8c"/><rect x="709" y="18" width="1" height="3" fill="#8c8c8c"/><rect x="719" y="0" width="1" height="21" fill="#8c8c8c"/><rect x="728" y="18" width="1" height="3" fill="#8c8c8c"/><rect x="738" y="15" width="1" height="6" fill="#8c8c8c"/><rect x="748" y="18" width="1" height="3" fill="#8c8c8c"/><rect x="758" y="15" width="1" height="6" fill="#8c8c8c"/><rect x="767" y="18" width="1" height="3" fill="#8c8c8c"/><rect x="777" y="15" width="1" height="6" fill="#8c8c8c"/><rect x="787" y="18" width="1" height="3" fill="#8c8c8c"/><rect x="797" y="15" width="1" height="6" fill="#8c8c8c"/><rect x="806" y="18" width="1" height="3" fill="#8c8c8c"/><rect x="816" y="0" width="1" height="21" fill="#8c8c8c"/><rect x="826" y="18" width="1" height="3" fill="#8c8c8c"/><rect x="836" y="15" width="1" height="6" fill="#8c8c8c"/><rect x="845" y="18" width="1" height="3" fill="#8c8c8c"/><rect x="855" y="15" width="1" height="6" fill="#8c8c8c"/><rect x="865" y="18" width="1" height="3" fill="#8c8c8c"/><rect x="875" y="15" width="1" height="6" fill="#8c8c8c"/><rect x="884" y="18" width="1" height="3" fill="#8c8c8c"/><rect x="894" y="15" width="1" height="6" fill="#8c8c8c"/><rect x="904" y="18" width="1" height="3" fill="#8c8c8c"/><rect x="913" y="0" width="1" height="21" fill="#8c8c8c"/><rect x="923" y="18" width="1" height="3" fill="#8c8c8c"/><rect x="933" y="15" width="1" height="6" fill="#8c8c8c"/><rect x="943" y="18" width="1" height="3" fill="#8c8c8c"/><rect x="952" y="15" width="1" height="6" fill="#8c8c8c"/><rect x="962" y="18" width="1" height="3" fill="#8c8c8c"/><rect x="972" y="15" width="1" height="6" fill="#8c8c8c"/><rect x="982" y="18" width="1" height="3" fill="#8c8c8c"/><rect x="991" y="15" width="1" height="6" fill="#8c8c8c"/><rect x="1001" y="18" width="1" height="3" fill="#8c8c8c"/><rect x="1011" y="0" width="1" height="21" fill="#8c8c8c"/><rect x="1021" y="18" width="1" height="3" fill="#8c8c8c"/><rect x="1030" y="15" width="1" height="6" fill="#8c8c8c"/><rect x="1040" y="18" width="1" height="3" fill="#8c8c8c"/><rect x="1050" y="15" width="1" height="6" fill="#8c8c8c"/><rect x="1060" y="18" width="1" height="3" fill="#8c8c8c"/><rect x="1069" y="15" width="1" height="6" fill="#8c8c8c"/><rect x="1079" y="18" width="1" height="3" fill="#8c8c8c"/><rect x="1089" y="15" width="1" height="6" fill="#8c8c8c"/><rect x="1099" y="18" width="1" height="3" fill="#8c8c8c"/><rect x="1108" y="0" width="1" height="21" fill="#8c8c8c"/><rect x="1118" y="18" width="1" height="3" fill="#8c8c8c"/><rect x="1128" y="15" width="1" height="6" fill="#8c8c8c"/><rect x="1138" y="18" width="1" height="3" fill="#8c8c8c"/><rect x="1147" y="15" width="1" height="6" fill="#8c8c8c"/><rect x="1157" y="18" width="1" height="3" fill="#8c8c8c"/><rect x="1167" y="15" width="1" height="6" fill="#8c8c8c"/><rect x="1177" y="18" width="1" height="3" fill="#8c8c8c"/><rect x="1186" y="15" width="1" height="6" fill="#8c8c8c"/><rect x="1196" y="18" width="1" height="3" fill="#8c8c8c"/><rect x="1206" y="0" width="1" height="21" fill="#8c8c8c"/><rect x="1216" y="18" width="1" height="3" fill="#8c8c8c"/><rect x="1225" y="15" width="1" height="6" fill="#8c8c8c"/><rect x="1235" y="18" width="1" height="3" fill="#8c8c8c"/><rect x="1245" y="15" width="1" height="6" fill="#8c8c8c"/><rect x="1254" y="18" width="1" height="3" fill="#8c8c8c"/><rect x="1264" y="15" width="1" height="6" fill="#8c8c8c"/><rect x="1274" y="18" width="1" height="3" fill="#8c8c8c"/><rect x="1284" y="15" width="1" height="6" fill="#8c8c8c"/><rect x="1293" y="18" width="1" height="3" fill="#8c8c8c"/><rect x="1303" y="0" width="1" height="21" fill="#8c8c8c"/><rect x="1313" y="18" width="1" height="3" fill="#8c8c8c"/><rect x="1323" y="15" width="1" height="6" fill="#8c8c8c"/><rect x="1332" y="18" width="1" height="3" fill="#8c8c8c"/><rect x="1342" y="15" width="1" height="6" fill="#8c8c8c"/><rect x="1352" y="18" width="1" height="3" fill="#8c8c8c"/><rect x="1362" y="15" width="1" height="6" fill="#8c8c8c"/><rect x="1371" y="18" width="1" height="3" fill="#8c8c8c"/><rect x="1381" y="15" width="1" height="6" fill="#8c8c8c"/><rect x="1391" y="18" width="1" height="3" fill="#8c8c8c"/><rect x="1401" y="0" width="1" height="21" fill="#8c8c8c"/><rect x="1410" y="18" width="1" height="3" fill="#8c8c8c"/><rect x="1420" y="15" width="1" height="6" fill="#8c8c8c"/><rect x="1430" y="18" width="1" height="3" fill="#8c8c8c"/></svg>
<div class="t" style="left:111.06px;top:116px;font-size:15px;color:#c4c4c4;">200</div>
<div class="t" style="left:208.495px;top:116px;font-size:15px;color:#c4c4c4;">150</div>
<div class="t" style="left:305.93px;top:116px;font-size:15px;color:#c4c4c4;">100</div>
<div class="t" style="left:403.365px;top:116px;font-size:15px;color:#c4c4c4;">50</div>
<div class="t" style="left:500.8px;top:116px;font-size:15px;color:#c4c4c4;">0</div>
<div class="t" style="left:598.235px;top:116px;font-size:15px;color:#c4c4c4;">50</div>
<div class="t" style="left:695.6700000000001px;top:116px;font-size:15px;color:#c4c4c4;">100</div>
<div class="t" style="left:793.105px;top:116px;font-size:15px;color:#c4c4c4;">150</div>
<div class="t" style="left:890.54px;top:116px;font-size:15px;color:#c4c4c4;">200</div>
<div class="t" style="left:987.975px;top:116px;font-size:15px;color:#c4c4c4;">250</div>
<div class="t" style="left:1085.41px;top:116px;font-size:15px;color:#c4c4c4;">300</div>
<div class="t" style="left:1182.845px;top:116px;font-size:15px;color:#c4c4c4;">350</div>
<div class="t" style="left:1280.28px;top:116px;font-size:15px;color:#c4c4c4;">400</div>
<div class="t" style="left:1377.7150000000001px;top:116px;font-size:15px;color:#c4c4c4;">450</div>
<div class="t" style="left:1475.15px;top:116px;font-size:15px;color:#c4c4c4;">500</div>
<svg class="i" style="left:51px;top:133px;" width="20" height="875" viewBox="0 0 20 875"><rect x="14" y="9" width="6" height="1" fill="#8c8c8c"/><rect x="17" y="19" width="3" height="1" fill="#8c8c8c"/><rect x="14" y="29" width="6" height="1" fill="#8c8c8c"/><rect x="17" y="38" width="3" height="1" fill="#8c8c8c"/><rect x="0" y="48" width="20" height="1" fill="#8c8c8c"/><rect x="17" y="58" width="3" height="1" fill="#8c8c8c"/><rect x="14" y="68" width="6" height="1" fill="#8c8c8c"/><rect x="17" y="77" width="3" height="1" fill="#8c8c8c"/><rect x="14" y="87" width="6" height="1" fill="#8c8c8c"/><rect x="17" y="97" width="3" height="1" fill="#8c8c8c"/><rect x="14" y="106" width="6" height="1" fill="#8c8c8c"/><rect x="17" y="116" width="3" height="1" fill="#8c8c8c"/><rect x="14" y="126" width="6" height="1" fill="#8c8c8c"/><rect x="17" y="136" width="3" height="1" fill="#8c8c8c"/><rect x="0" y="145" width="20" height="1" fill="#8c8c8c"/><rect x="17" y="155" width="3" height="1" fill="#8c8c8c"/><rect x="14" y="165" width="6" height="1" fill="#8c8c8c"/><rect x="17" y="175" width="3" height="1" fill="#8c8c8c"/><rect x="14" y="184" width="6" height="1" fill="#8c8c8c"/><rect x="17" y="194" width="3" height="1" fill="#8c8c8c"/><rect x="14" y="204" width="6" height="1" fill="#8c8c8c"/><rect x="17" y="214" width="3" height="1" fill="#8c8c8c"/><rect x="14" y="223" width="6" height="1" fill="#8c8c8c"/><rect x="17" y="233" width="3" height="1" fill="#8c8c8c"/><rect x="0" y="243" width="20" height="1" fill="#8c8c8c"/><rect x="17" y="253" width="3" height="1" fill="#8c8c8c"/><rect x="14" y="262" width="6" height="1" fill="#8c8c8c"/><rect x="17" y="272" width="3" height="1" fill="#8c8c8c"/><rect x="14" y="282" width="6" height="1" fill="#8c8c8c"/><rect x="17" y="292" width="3" height="1" fill="#8c8c8c"/><rect x="14" y="301" width="6" height="1" fill="#8c8c8c"/><rect x="17" y="311" width="3" height="1" fill="#8c8c8c"/><rect x="14" y="321" width="6" height="1" fill="#8c8c8c"/><rect x="17" y="331" width="3" height="1" fill="#8c8c8c"/><rect x="0" y="340" width="20" height="1" fill="#8c8c8c"/><rect x="17" y="350" width="3" height="1" fill="#8c8c8c"/><rect x="14" y="360" width="6" height="1" fill="#8c8c8c"/><rect x="17" y="370" width="3" height="1" fill="#8c8c8c"/><rect x="14" y="379" width="6" height="1" fill="#8c8c8c"/><rect x="17" y="389" width="3" height="1" fill="#8c8c8c"/><rect x="14" y="399" width="6" height="1" fill="#8c8c8c"/><rect x="17" y="409" width="3" height="1" fill="#8c8c8c"/><rect x="14" y="418" width="6" height="1" fill="#8c8c8c"/><rect x="17" y="428" width="3" height="1" fill="#8c8c8c"/><rect x="0" y="438" width="20" height="1" fill="#8c8c8c"/><rect x="17" y="448" width="3" height="1" fill="#8c8c8c"/><rect x="14" y="457" width="6" height="1" fill="#8c8c8c"/><rect x="17" y="467" width="3" height="1" fill="#8c8c8c"/><rect x="14" y="477" width="6" height="1" fill="#8c8c8c"/><rect x="17" y="486" width="3" height="1" fill="#8c8c8c"/><rect x="14" y="496" width="6" height="1" fill="#8c8c8c"/><rect x="17" y="506" width="3" height="1" fill="#8c8c8c"/><rect x="14" y="516" width="6" height="1" fill="#8c8c8c"/><rect x="17" y="525" width="3" height="1" fill="#8c8c8c"/><rect x="0" y="535" width="20" height="1" fill="#8c8c8c"/><rect x="17" y="545" width="3" height="1" fill="#8c8c8c"/><rect x="14" y="555" width="6" height="1" fill="#8c8c8c"/><rect x="17" y="564" width="3" height="1" fill="#8c8c8c"/><rect x="14" y="574" width="6" height="1" fill="#8c8c8c"/><rect x="17" y="584" width="3" height="1" fill="#8c8c8c"/><rect x="14" y="594" width="6" height="1" fill="#8c8c8c"/><rect x="17" y="603" width="3" height="1" fill="#8c8c8c"/><rect x="14" y="613" width="6" height="1" fill="#8c8c8c"/><rect x="17" y="623" width="3" height="1" fill="#8c8c8c"/><rect x="0" y="633" width="20" height="1" fill="#8c8c8c"/><rect x="17" y="642" width="3" height="1" fill="#8c8c8c"/><rect x="14" y="652" width="6" height="1" fill="#8c8c8c"/><rect x="17" y="662" width="3" height="1" fill="#8c8c8c"/><rect x="14" y="672" width="6" height="1" fill="#8c8c8c"/><rect x="17" y="681" width="3" height="1" fill="#8c8c8c"/><rect x="14" y="691" width="6" height="1" fill="#8c8c8c"/><rect x="17" y="701" width="3" height="1" fill="#8c8c8c"/><rect x="14" y="711" width="6" height="1" fill="#8c8c8c"/><rect x="17" y="720" width="3" height="1" fill="#8c8c8c"/><rect x="0" y="730" width="20" height="1" fill="#8c8c8c"/><rect x="17" y="740" width="3" height="1" fill="#8c8c8c"/><rect x="14" y="750" width="6" height="1" fill="#8c8c8c"/><rect x="17" y="759" width="3" height="1" fill="#8c8c8c"/><rect x="14" y="769" width="6" height="1" fill="#8c8c8c"/><rect x="17" y="779" width="3" height="1" fill="#8c8c8c"/><rect x="14" y="789" width="6" height="1" fill="#8c8c8c"/><rect x="17" y="798" width="3" height="1" fill="#8c8c8c"/><rect x="14" y="808" width="6" height="1" fill="#8c8c8c"/><rect x="17" y="818" width="3" height="1" fill="#8c8c8c"/><rect x="0" y="828" width="20" height="1" fill="#8c8c8c"/><rect x="17" y="837" width="3" height="1" fill="#8c8c8c"/><rect x="14" y="847" width="6" height="1" fill="#8c8c8c"/><rect x="17" y="857" width="3" height="1" fill="#8c8c8c"/><rect x="14" y="866" width="6" height="1" fill="#8c8c8c"/></svg>
<div class="t" style="left:52.5px;top:183.035px;font-size:15px;color:#c4c4c4;">5</div>
<div class="t" style="left:52.5px;top:197.835px;font-size:15px;color:#c4c4c4;">0</div>
<div class="t" style="left:52.5px;top:280.47px;font-size:15px;color:#c4c4c4;">1</div>
<div class="t" style="left:52.5px;top:295.27000000000004px;font-size:15px;color:#c4c4c4;">0</div>
<div class="t" style="left:52.5px;top:310.07000000000005px;font-size:15px;color:#c4c4c4;">0</div>
<div class="t" style="left:52.5px;top:377.905px;font-size:15px;color:#c4c4c4;">1</div>
<div class="t" style="left:52.5px;top:392.705px;font-size:15px;color:#c4c4c4;">5</div>
<div class="t" style="left:52.5px;top:407.505px;font-size:15px;color:#c4c4c4;">0</div>
<div class="t" style="left:52.5px;top:475.34000000000003px;font-size:15px;color:#c4c4c4;">2</div>
<div class="t" style="left:52.5px;top:490.14000000000004px;font-size:15px;color:#c4c4c4;">0</div>
<div class="t" style="left:52.5px;top:504.94000000000005px;font-size:15px;color:#c4c4c4;">0</div>
<div class="t" style="left:52.5px;top:572.775px;font-size:15px;color:#c4c4c4;">2</div>
<div class="t" style="left:52.5px;top:587.5749999999999px;font-size:15px;color:#c4c4c4;">5</div>
<div class="t" style="left:52.5px;top:602.375px;font-size:15px;color:#c4c4c4;">0</div>
<div class="t" style="left:52.5px;top:670.21px;font-size:15px;color:#c4c4c4;">3</div>
<div class="t" style="left:52.5px;top:685.01px;font-size:15px;color:#c4c4c4;">0</div>
<div class="t" style="left:52.5px;top:699.8100000000001px;font-size:15px;color:#c4c4c4;">0</div>
<div class="t" style="left:52.5px;top:767.6450000000001px;font-size:15px;color:#c4c4c4;">3</div>
<div class="t" style="left:52.5px;top:782.445px;font-size:15px;color:#c4c4c4;">5</div>
<div class="t" style="left:52.5px;top:797.2450000000001px;font-size:15px;color:#c4c4c4;">0</div>
<div class="t" style="left:52.5px;top:865.08px;font-size:15px;color:#c4c4c4;">4</div>
<div class="t" style="left:52.5px;top:879.88px;font-size:15px;color:#c4c4c4;">0</div>
<div class="t" style="left:52.5px;top:894.6800000000001px;font-size:15px;color:#c4c4c4;">0</div>
<div class="t" style="left:52.5px;top:962.5150000000001px;font-size:15px;color:#c4c4c4;">4</div>
<div class="t" style="left:52.5px;top:977.315px;font-size:15px;color:#c4c4c4;">5</div>
<div class="t" style="left:52.5px;top:992.1150000000001px;font-size:15px;color:#c4c4c4;">0</div>
<div class="a" style="left:51px;top:1008px;width:1869px;height:19px;background:#4a4a4a;"></div>
<div class="a" style="left:51px;top:1008px;width:60px;height:19px;background:#474747;"></div>
<div class="t" style="left:56px;top:1011px;font-size:13px;color:#e6e6e6;letter-spacing:-0.4px">194.87%</div>
<div class="a" style="left:111px;top:1008px;width:229px;height:19px;background:#535353;"></div>
<div class="t" style="left:127px;top:1010px;font-size:14px;color:#d8d8d8;">500 像素 x 500 像素 (72 ppi)</div>
<svg class="i" style="left:327px;top:1012px;" width="6" height="12" viewBox="0 0 6 12"><path d="M0.8 0.8L4.8 6L0.8 11.2" fill="none" stroke="#bdbdbd" stroke-width="1.1"/></svg>
<svg class="i" style="left:350px;top:1013px;" width="6" height="11" viewBox="0 0 6 11"><path d="M5 0.8L1 5.5L5 10.2" fill="none" stroke="#8a8a8a" stroke-width="1.1"/></svg>
<div class="a" style="left:804px;top:1011px;width:632px;height:14px;background:#6a6a6a;border-radius:2px"></div>
<svg class="i" style="left:1885px;top:1013px;" width="6" height="11" viewBox="0 0 6 11"><path d="M0.8 0.8L4.8 5.5L0.8 10.2" fill="none" stroke="#8a8a8a" stroke-width="1.1"/></svg>
<div class="a" style="left:498px;top:133px;width:975px;height:875px;overflow:hidden">
<svg class="i" style="left:0.30000000000001137px;top:-49.400000000000006px" width="975" height="975" viewBox="0 0 975 975">
<defs>
<radialGradient id="bg" gradientUnits="userSpaceOnUse" cx="-30" cy="412" r="1100">
<stop offset="0" stop-color="#cddff2"/>
<stop offset="0.03" stop-color="#d3def1"/>
<stop offset="0.08" stop-color="#dcdaee"/>
<stop offset="0.13" stop-color="#e8d5ea"/>
<stop offset="0.2" stop-color="#f1d2e6"/>
<stop offset="0.47" stop-color="#f4d3e2"/>
<stop offset="0.545" stop-color="#f7dfdd"/>
<stop offset="0.636" stop-color="#f8f1d9"/>
<stop offset="0.78" stop-color="#e3eedf"/>
<stop offset="0.936" stop-color="#c6e3f3"/>
<stop offset="1" stop-color="#c4e2f3"/>
</radialGradient>
<clipPath id="ringclip"><path clip-rule="evenodd" d="M234.59999999999997 486.4a252.3 252.3 0 1 0 504.6 0a252.3 252.3 0 1 0 -504.6 0ZM291.2 486.4a195.7 195.7 0 1 0 391.4 0a195.7 195.7 0 1 0 -391.4 0Z"/></clipPath>
<filter id="blur13" x="-30%" y="-30%" width="160%" height="160%"><feGaussianBlur stdDeviation="13"/></filter>
<filter id="blur10" x="-30%" y="-30%" width="160%" height="160%"><feGaussianBlur stdDeviation="10"/></filter>
<filter id="blur6" x="-30%" y="-30%" width="160%" height="160%"><feGaussianBlur stdDeviation="6"/></filter>
<filter id="blur5" x="-30%" y="-30%" width="160%" height="160%"><feGaussianBlur stdDeviation="5"/></filter>
<filter id="blur3" x="-30%" y="-30%" width="160%" height="160%"><feGaussianBlur stdDeviation="3"/></filter>
<filter id="blur1" x="-30%" y="-30%" width="160%" height="160%"><feGaussianBlur stdDeviation="2.2"/></filter>
<linearGradient id="hlmask" gradientUnits="userSpaceOnUse" x1="0" y1="226.39999999999998" x2="0" y2="746.4">
<stop offset="0" stop-color="#fff"/><stop offset="0.12" stop-color="#fff"/><stop offset="0.26" stop-color="#000"/>
<stop offset="0.77" stop-color="#000"/><stop offset="0.875" stop-color="#fff"/><stop offset="1" stop-color="#fff"/>
</linearGradient>
<mask id="hm" maskUnits="userSpaceOnUse" x="0" y="0" width="975" height="975"><rect x="0" y="0" width="975" height="975" fill="url(#hlmask)"/></mask>
</defs>
<rect x="0" y="0" width="975" height="975" fill="url(#bg)"/>
<circle cx="486.9" cy="486.4" r="226" fill="none" stroke="#ffffff" stroke-opacity="0.55" stroke-width="72" filter="url(#blur6)"/>
<circle cx="486.9" cy="514.4" r="226" fill="none" stroke="#4a8e2a" stroke-opacity="0.6" stroke-width="54" filter="url(#blur10)"/>
<circle cx="486.9" cy="486.4" r="254.2" fill="none" stroke="#f03c3a" stroke-width="4.2"/>
<g clip-path="url(#ringclip)">
<rect x="0" y="0" width="975" height="975" fill="#238d0d"/>
<circle cx="486.9" cy="501.4" r="225" fill="none" stroke="#50c61a" stroke-width="50" filter="url(#blur5)"/>
<circle cx="486.9" cy="501.4" r="225" fill="none" stroke="#76e220" stroke-width="20" filter="url(#blur5)"/>
<circle cx="486.9" cy="470.4" r="224" fill="none" stroke="#e6f7dc" stroke-width="8" filter="url(#blur1)" mask="url(#hm)"/>
</g>
<circle cx="486.9" cy="486.4" r="252.4" fill="none" stroke="#8a2a1a" stroke-opacity="0.35" stroke-width="0.8"/>
</svg>
</div>
<div class="a" style="left:1074.5px;top:971.5px;width:227px;height:30px;background:#ffffff;border:1px solid #9aa4a6"></div>
<svg class="i" style="left:1043px;top:966px;" width="40" height="38" viewBox="0 0 40 38"><defs><linearGradient id="sg" x1="0" y1="0" x2="0" y2="1"><stop offset="0" stop-color="#f47a44"/><stop offset="1" stop-color="#e84a0e"/></linearGradient></defs><g transform="rotate(-17 20 19)"><rect x="5.5" y="4.5" width="29" height="29" rx="5" fill="url(#sg)"/><path d="M28 11C23 9.5 13.5 10 12.5 15C11.5 20 26 17.5 26 22.5C26 26.5 16 27 11 25" fill="none" stroke="#fff" stroke-width="4.8" stroke-linecap="round"/></g></svg>
<div class="t" style="left:1087px;top:979px;font-size:18px;color:#2878c8;-webkit-text-stroke:0.7px #2878c8">英</div>
<svg class="i" style="left:1116px;top:980px;" width="16" height="16" viewBox="0 0 16 16"><circle cx="3.5" cy="4" r="2" fill="#2878c8"/><path d="M12 7.5C12.5 10 11 12 9 13" fill="none" stroke="#2878c8" stroke-width="2" stroke-linecap="round"/><circle cx="11.3" cy="7.2" r="1.4" fill="#2878c8"/></svg>
<svg class="i" style="left:1140px;top:977.5px;" width="21" height="21" viewBox="0 0 21 21"><circle cx="10.2" cy="10" r="9" fill="none" stroke="#2878c8" stroke-width="2"/><path d="M7 7V10M13.3 7V10" stroke="#2878c8" stroke-width="1.6"/><path d="M6.3 12.5C8 15.2 12.5 15.2 14.2 12.5" fill="none" stroke="#2878c8" stroke-width="1.6"/></svg>
<svg class="i" style="left:1170px;top:977px;" width="17" height="22" viewBox="0 0 17 22"><rect x="4.5" y="0.5" width="7" height="12.5" rx="3.5" fill="#2878c8"/><path d="M1.5 9C1.5 18 14.5 18 14.5 9" fill="none" stroke="#2878c8" stroke-width="1.8"/><path d="M8 15V19.5M3.5 20H12.5" stroke="#2878c8" stroke-width="2"/></svg>
<svg class="i" style="left:1195px;top:980px;" width="20" height="16" viewBox="0 0 20 16"><rect x="0.8" y="0.8" width="18.5" height="14" rx="2" fill="#2878c8"/><g fill="#fff"><rect x="3" y="3.5" width="2" height="1.8"/><rect x="7" y="3.5" width="2" height="1.8"/><rect x="11" y="3.5" width="2" height="1.8"/><rect x="14.5" y="3.5" width="2.5" height="1.8"/><rect x="3" y="6.8" width="2" height="1.8"/><rect x="6" y="6.8" width="2" height="1.8"/><rect x="9.5" y="6.8" width="2" height="1.8"/><rect x="13" y="6.8" width="2" height="1.8"/><rect x="3" y="10" width="2" height="1.8"/><rect x="6" y="10" width="11" height="1.8"/></g></svg>
<svg class="i" style="left:1224px;top:977px;" width="21" height="21" viewBox="0 0 21 21"><circle cx="7.5" cy="4" r="3.4" fill="#b4c0d4"/><path d="M1 16C1 11 3 8.5 7 8.5C10 8.5 12 10 12.5 12V19H2Z" fill="#b4c0d4"/><path d="M7 11H19.5V18H7Z" fill="#fff" stroke="#fff"/><path d="M8.5 12.5H10.5V18M13 12.5H17L14.5 18" fill="none" stroke="#b4c0d4" stroke-width="1.6"/></svg>
<svg class="i" style="left:1250px;top:978.5px;" width="19" height="18" viewBox="0 0 19 18"><path d="M5.5 0.8L9 2.5L12.5 0.8L18 4.5L16 8L14.5 7.5V17H4V7.5L2.5 8L0.5 4.5Z" fill="#2878c8"/></svg>
<svg class="i" style="left:1278px;top:979px;" width="17" height="17" viewBox="0 0 17 17"><rect x="0.5" y="0.5" width="6.8" height="6.8" rx="1" fill="#2878c8"/><rect x="9.8" y="1.3" width="5.4" height="5.4" rx="1" fill="none" stroke="#2878c8" stroke-width="1.8"/><rect x="0.5" y="9.6" width="6.8" height="6.8" rx="1" fill="#2878c8"/><rect x="9" y="9.6" width="6.8" height="6.8" rx="1" fill="#2878c8"/></svg>
<div class="a" style="left:1508px;top:76px;width:412px;height:24px;background:#424242;"></div>
<div class="a" style="left:1509px;top:99.5px;width:411px;height:17px;background:#424242;border-top:1px solid #393939;border-left:1px solid #393939;border-radius:5px 0 0 0"></div>
<svg class="i" style="left:1590px;top:102px;" width="14" height="12" viewBox="0 0 14 12"><path d="M2.8 3.5L5 5.8L2.8 8.1M6.8 3.5L9 5.8L6.8 8.1" fill="none" stroke="#e6e6e6" stroke-width="1.3"/></svg>
<div class="a" style="left:1509px;top:116px;width:99px;height:51px;background:#535353;"></div>
<div class="a" style="left:1509px;top:166px;width:99px;height:2px;background:#393939;"></div>
<div class="a" style="left:1545px;top:120px;width:1px;height:5px;background:#3e3e3e;"></div>
<div class="a" style="left:1547px;top:120px;width:1px;height:5px;background:#3e3e3e;"></div>
<div class="a" style="left:1549px;top:120px;width:1px;height:5px;background:#3e3e3e;"></div>
<div class="a" style="left:1551px;top:120px;width:1px;height:5px;background:#3e3e3e;"></div>
<div class="a" style="left:1553px;top:120px;width:1px;height:5px;background:#3e3e3e;"></div>
<div class="a" style="left:1555px;top:120px;width:1px;height:5px;background:#3e3e3e;"></div>
<div class="a" style="left:1557px;top:120px;width:1px;height:5px;background:#3e3e3e;"></div>
<div class="a" style="left:1559px;top:120px;width:1px;height:5px;background:#3e3e3e;"></div>
<div class="a" style="left:1561px;top:120px;width:1px;height:5px;background:#3e3e3e;"></div>
<div class="a" style="left:1563px;top:120px;width:1px;height:5px;background:#3e3e3e;"></div>
<div class="a" style="left:1565px;top:120px;width:1px;height:5px;background:#3e3e3e;"></div>
<div class="a" style="left:1567px;top:120px;width:1px;height:5px;background:#3e3e3e;"></div>
<div class="a" style="left:1569px;top:120px;width:1px;height:5px;background:#3e3e3e;"></div>
<svg class="i" style="left:1519px;top:133px;" width="26" height="24" viewBox="0 0 26 24"><g fill="#e3e3e3"><rect x="0.5" y="1" width="2" height="2"/><rect x="4" y="1" width="6" height="2"/><rect x="0.5" y="4.8" width="2" height="2"/><rect x="4" y="4.8" width="6" height="2"/><rect x="0.5" y="8.6" width="2" height="2"/><rect x="4" y="8.6" width="6" height="2"/><circle cx="15.5" cy="4.5" r="4"/><rect x="14" y="7" width="3" height="5.5"/><rect x="8" y="12" width="16" height="5" rx="1"/><rect x="8" y="18.5" width="16" height="2"/></g></svg>
<div class="t" style="left:1556px;top:138px;font-size:14px;color:#e6e6e6;">仿...</div>
<div class="a" style="left:1607.5px;top:116px;width:2px;height:864px;background:#2b2b2b;"></div>
<div class="a" style="left:1610px;top:116px;width:310px;height:34.5px;background:#424242;"></div>
<div class="a" style="left:1610px;top:116px;width:45.5px;height:34.5px;background:#474747;"></div>
<div class="t" style="left:1621px;top:125px;font-size:14px;color:#b8b8b8;">库</div>
<div class="a" style="left:1656.5px;top:116px;width:48.5px;height:34.5px;background:#474747;"></div>
<div class="t" style="left:1667.5px;top:125px;font-size:14px;color:#b8b8b8;">颜色</div>
<div class="a" style="left:1706px;top:116px;width:49px;height:34.5px;background:#474747;"></div>
<div class="t" style="left:1718px;top:125px;font-size:14px;color:#b8b8b8;">色板</div>
<div class="a" style="left:1756px;top:116px;width:78px;height:34.5px;background:#474747;"></div>
<div class="t" style="left:1768px;top:125px;font-size:14px;color:#b8b8b8;">历史记录</div>
<div class="a" style="left:1655.5px;top:116px;width:1px;height:34.5px;background:#3a3a3a;"></div>
<div class="a" style="left:1705px;top:116px;width:1px;height:34.5px;background:#3a3a3a;"></div>
<div class="a" style="left:1755px;top:116px;width:1px;height:34.5px;background:#3a3a3a;"></div>
<div class="a" style="left:1834px;top:116px;width:1px;height:34.5px;background:#3a3a3a;"></div>
<div class="a" style="left:1834px;top:116px;width:49.5px;height:35px;background:#535353;"></div>
<div class="t" style="left:1845.5px;top:125px;font-size:14px;color:#f2f2f2;">图层</div>
<div class="a" style="left:1610px;top:150.5px;width:310px;height:830px;background:#535353;"></div>
<div class="a" style="left:1615px;top:162px;width:105px;height:26.5px;background:#454545;border:1px solid #585858;border-radius:3px"></div>
<svg class="i" style="left:1624px;top:169px;" width="14" height="14" viewBox="0 0 14 14"><circle cx="5.5" cy="5.5" r="4.5" fill="none" stroke="#e6e6e6" stroke-width="1.8"/><path d="M8.8 8.8L12.5 12.5" stroke="#e6e6e6" stroke-width="2.2" stroke-linecap="round"/></svg>
<div class="t" style="left:1643.5px;top:166px;font-size:15px;color:#e8e8e8;">类型</div>
<svg class="i" style="left:1708px;top:174px;" width="8" height="4.6" viewBox="0 0 8 4.6"><path d="M0.5 0.5L4.0 4.1L7.5 0.5" fill="none" stroke="#d0d0d0" stroke-width="1.2"/></svg>
<svg class="i" style="left:1742.5px;top:167.5px;" width="16" height="13" viewBox="0 0 16 13"><rect x="0.8" y="0.8" width="14" height="11" fill="none" stroke="#d8d8d8" stroke-width="1.4"/><path d="M3 10L6 5.5L8 8L10 5L13 10Z" fill="#d8d8d8"/></svg>
<svg class="i" style="left:1772.5px;top:167.5px;" width="15" height="15" viewBox="0 0 15 15"><circle cx="7" cy="7" r="6" fill="none" stroke="#e0e0e0" stroke-width="1.5"/><path d="M11.2 2.8A6 6 0 0 1 2.8 11.2Z" fill="#e0e0e0"/></svg>
<svg class="i" style="left:1803.5px;top:167.5px;" width="14" height="14" viewBox="0 0 14 14"><path d="M0.8 0.8H12.5V4.5H11.3V2.3H7.8V11.8H9.5V12.8H3.8V11.8H5.5V2.3H2V4.5H0.8Z" fill="#e0e0e0" stroke="#e0e0e0" stroke-width="0.6"/></svg>
<svg class="i" style="left:1832.5px;top:167.5px;" width="16" height="14" viewBox="0 0 16 14"><rect x="2.5" y="2" width="10.5" height="9.5" fill="none" stroke="#d8d8d8" stroke-width="1.3"/><g fill="#535353" stroke="#d8d8d8" stroke-width="1.1"><rect x="0.8" y="0.5" width="3.2" height="3.2"/><rect x="11.5" y="0.5" width="3.2" height="3.2"/><rect x="0.8" y="9.8" width="3.2" height="3.2"/><rect x="11.5" y="9.8" width="3.2" height="3.2"/></g></svg>
<svg class="i" style="left:1863.5px;top:167px;" width="14" height="14" viewBox="0 0 14 14"><path d="M4.5 5V0.8H9.5L12.8 4V11H8" fill="none" stroke="#e0e0e0" stroke-width="1.4"/><rect x="0.8" y="6" width="7" height="7" fill="#e0e0e0"/></svg>
<svg class="i" style="left:1898.5px;top:163px;" width="12" height="23" viewBox="0 0 12 23"><rect x="0.8" y="3" width="10" height="19" rx="5" fill="#474747" stroke="#4c4c4c"/><circle cx="5.8" cy="5.8" r="5" fill="#e8e8e8"/></svg>
<div class="a" style="left:1610px;top:190.5px;width:310px;height:1.5px;background:#474747;"></div>
<div class="a" style="left:1614.5px;top:199px;width:146px;height:26.5px;background:#454545;border:1px solid #585858;border-radius:3px"></div>
<div class="t" style="left:1625px;top:203px;font-size:15px;color:#f0f0f0;">正常</div>
<svg class="i" style="left:1748px;top:211px;" width="8" height="4.6" viewBox="0 0 8 4.6"><path d="M0.5 0.5L4.0 4.1L7.5 0.5" fill="none" stroke="#d0d0d0" stroke-width="1.2"/></svg>
<div class="t" style="left:1770.5px;top:202px;font-size:14.5px;color:#e0e0e0;">不透明度:</div>
<div class="a" style="left:1842px;top:199px;width:66px;height:22px;background:#454545;border:1px solid #585858;border-radius:3px"></div>
<div class="a" style="left:1889.5px;top:199px;width:1px;height:22px;background:#535353;"></div>
<div class="t" style="left:1844.5px;top:204px;font-size:13.5px;color:#f2f2f2;">100%</div>
<svg class="i" style="left:1896px;top:209.8px;" width="8" height="4.6" viewBox="0 0 8 4.6"><path d="M0.5 0.5L4.0 4.1L7.5 0.5" fill="none" stroke="#d0d0d0" stroke-width="1.2"/></svg>
<div class="a" style="left:1610px;top:227px;width:310px;height:1.5px;background:#474747;"></div>
<div class="t" style="left:1618px;top:238px;font-size:14.5px;color:#e0e0e0;">锁定:</div>
<svg class="i" style="left:1665px;top:239px;" width="14" height="14" viewBox="0 0 14 14"><rect x="0" y="0" width="14" height="14" fill="#9a9a9a"/><g fill="#5e5e5e"><rect x="1.2" y="1.2" width="3.9" height="3.9"/><rect x="8.9" y="1.2" width="3.9" height="3.9"/><rect x="5" y="5" width="3.9" height="3.9"/><rect x="1.2" y="8.9" width="3.9" height="3.9"/><rect x="8.9" y="8.9" width="3.9" height="3.9"/></g></svg>
<svg class="i" style="left:1692px;top:237.5px;" width="18" height="17" viewBox="0 0 18 17"><path d="M17 0.5L8 11" stroke="#a0a0a0" stroke-width="2.6" stroke-linecap="round"/><path d="M6.8 10C3.5 10 3 13 0.5 16C4 16 8.5 15 9 12Z" fill="#a0a0a0"/></svg>
<svg class="i" style="left:1718px;top:238px;" width="16" height="16" viewBox="0 0 16 16"><path d="M8 1V15M1 8H15" stroke="#e0e0e0" stroke-width="1.8"/><path d="M8 0L11 3.3H5ZM8 16L11 12.7H5ZM0 8L3.3 5V11ZM16 8L12.7 5V11Z" fill="#e0e0e0"/></svg>
<svg class="i" style="left:1746px;top:238px;" width="18" height="16" viewBox="0 0 18 16"><path d="M3 2.5H12.5L15.5 5.5V13.5H3Z" fill="none" stroke="#e0e0e0" stroke-width="1.3"/><path d="M0.5 13.5H17.5M3 0V16M15.5 0.5V2" stroke="#e0e0e0" stroke-width="1"/></svg>
<svg class="i" style="left:1775.5px;top:238px;" width="13" height="15.5" viewBox="0 0 13 15.5"><path d="M3 7V4.5A3.5 3.5 0 0 1 10 4.5V7" fill="none" stroke="#e6e6e6" stroke-width="1.8"/><rect x="0.5" y="6.5" width="12" height="8.5" fill="#e6e6e6"/><circle cx="6.5" cy="10.7" r="1" fill="#535353"/></svg>
<div class="t" style="left:1800px;top:238px;font-size:14.5px;color:#e0e0e0;">填充:</div>
<div class="a" style="left:1842px;top:235.5px;width:66px;height:21.5px;background:#454545;border:1px solid #585858;border-radius:3px"></div>
<div class="a" style="left:1889.5px;top:235.5px;width:1px;height:21.5px;background:#535353;"></div>
<div class="t" style="left:1844px;top:240.5px;font-size:13.5px;color:#f2f2f2;">85%</div>
<svg class="i" style="left:1896px;top:246.3px;" width="8" height="4.6" viewBox="0 0 8 4.6"><path d="M0.5 0.5L4.0 4.1L7.5 0.5" fill="none" stroke="#d0d0d0" stroke-width="1.2"/></svg>
<div class="a" style="left:1610px;top:265.5px;width:310px;height:1.5px;background:#474747;"></div>
<div class="a" style="left:1648px;top:267px;width:272px;height:50.5px;background:#6a6a6a;"></div>
<svg class="i" style="left:1620.5px;top:287.8px;" width="16" height="10" viewBox="0 0 16 10"><path d="M0.5 5C4 -0.8 12 -0.8 15.5 5C12 10.8 4 10.8 0.5 5Z" fill="#e2e2e2"/><circle cx="8" cy="5" r="3.2" fill="#474747"/><circle cx="8.8" cy="3.9" r="0.8" fill="#e2e2e2"/></svg>
<svg class="i" style="left:1650px;top:270px;" width="46" height="46" viewBox="0 0 46 46"><path d="M1 14V1H15M31 1H44.5V14M44.5 31V44.5H31M15 44.5H1V31" fill="none" stroke="#ffffff" stroke-width="1.5"/><path d="M3.5 14V3.5H15M31 3.5H42V14M42 31V42H31M15 42H3.5V31" fill="none" stroke="#2a2a2a" stroke-width="1.2"/></svg>
<svg class="i" style="left:1661px;top:281px;" width="23.2" height="23" viewBox="0 0 23.2 23"><rect x="0" y="0" width="23.2" height="23" fill="#ffffff"/><rect x="2.6" y="2" width="3" height="3" fill="#e2e2e2"/><rect x="2.6" y="8" width="3" height="3" fill="#e2e2e2"/><rect x="2.6" y="14" width="3" height="3" fill="#e2e2e2"/><rect x="2.6" y="20" width="3" height="3" fill="#e2e2e2"/><rect x="5.6" y="5" width="3" height="3" fill="#e2e2e2"/><rect x="5.6" y="11" width="3" height="3" fill="#e2e2e2"/><rect x="5.6" y="17" width="3" height="3" fill="#e2e2e2"/><rect x="8.6" y="2" width="3" height="3" fill="#e2e2e2"/><rect x="8.6" y="8" width="3" height="3" fill="#e2e2e2"/><rect x="8.6" y="14" width="3" height="3" fill="#e2e2e2"/><rect x="8.6" y="20" width="3" height="3" fill="#e2e2e2"/><rect x="11.6" y="5" width="3" height="3" fill="#e2e2e2"/><rect x="11.6" y="11" width="3" height="3" fill="#e2e2e2"/><rect x="11.6" y="17" width="3" height="3" fill="#e2e2e2"/><rect x="14.6" y="2" width="3" height="3" fill="#e2e2e2"/><rect x="14.6" y="8" width="3" height="3" fill="#e2e2e2"/><rect x="14.6" y="14" width="3" height="3" fill="#e2e2e2"/><rect x="14.6" y="20" width="3" height="3" fill="#e2e2e2"/><rect x="17.6" y="5" width="3" height="3" fill="#e2e2e2"/><rect x="17.6" y="11" width="3" height="3" fill="#e2e2e2"/><rect x="17.6" y="17" width="3" height="3" fill="#e2e2e2"/><rect x="20.6" y="2" width="2.599999999999998" height="3" fill="#e2e2e2"/><rect x="20.6" y="8" width="2.599999999999998" height="3" fill="#e2e2e2"/><rect x="20.6" y="14" width="2.599999999999998" height="3" fill="#e2e2e2"/><rect x="20.6" y="20" width="2.599999999999998" height="3" fill="#e2e2e2"/><circle cx="11.5" cy="11" r="5.3" fill="none" stroke="#d66ed6" stroke-width="1.2"/></svg>
<svg class="i" style="left:1674px;top:294px;" width="18" height="17" viewBox="0 0 18 17"><rect x="0" y="0" width="18" height="17" fill="#474747" stroke="#2a2a2a" stroke-width="1.2"/><rect x="3.5" y="3.5" width="10.5" height="10" fill="none" stroke="#d0d0d0" stroke-width="1.2"/><g fill="#474747" stroke="#d0d0d0" stroke-width="1"><circle cx="3.5" cy="3.5" r="1.7"/><circle cx="14" cy="3.5" r="1.7"/><circle cx="3.5" cy="13.5" r="1.7"/><circle cx="14" cy="13.5" r="1.7"/></g></svg>
<div class="t" style="left:1706px;top:283.5px;font-size:15px;color:#f2f2f2;">椭圆 1</div>
<svg class="i" style="left:1908px;top:285px;" width="14" height="16" viewBox="0 0 14 16"><rect x="0.5" y="0.5" width="9.5" height="9.5" fill="none" stroke="#cfcfcf" stroke-width="1.1"/><rect x="5" y="4.5" width="6" height="6" fill="#eeeeee"/><rect x="4.5" y="9" width="9" height="5.5" fill="none" stroke="#cfcfcf" stroke-width="1.1"/></svg>
<div class="a" style="left:1610px;top:317.5px;width:310px;height:1.5px;background:#474747;"></div>
<div class="a" style="left:1647px;top:319px;width:1px;height:188px;background:#4a4a4a;"></div>
<svg class="i" style="left:1673px;top:324.5px;" width="16" height="10" viewBox="0 0 16 10"><path d="M0.5 5C4 -0.8 12 -0.8 15.5 5C12 10.8 4 10.8 0.5 5Z" fill="#e2e2e2"/><circle cx="8" cy="5" r="3.2" fill="#474747"/><circle cx="8.8" cy="3.9" r="0.8" fill="#e2e2e2"/></svg>
<div class="t" style="left:1696px;top:319px;font-size:15px;color:#e8e8e8;">效果</div>
<svg class="i" style="left:1694px;top:348.7px;" width="16" height="10" viewBox="0 0 16 10"><path d="M0.5 5C4 -0.8 12 -0.8 15.5 5C12 10.8 4 10.8 0.5 5Z" fill="#e2e2e2"/><circle cx="8" cy="5" r="3.2" fill="#474747"/><circle cx="8.8" cy="3.9" r="0.8" fill="#e2e2e2"/></svg>
<div class="t" style="left:1716.5px;top:343.5px;font-size:15px;color:#e8e8e8;">斜面和浮雕</div>
<svg class="i" style="left:1694px;top:372.5px;" width="16" height="10" viewBox="0 0 16 10"><path d="M0.5 5C4 -0.8 12 -0.8 15.5 5C12 10.8 4 10.8 0.5 5Z" fill="#e2e2e2"/><circle cx="8" cy="5" r="3.2" fill="#474747"/><circle cx="8.8" cy="3.9" r="0.8" fill="#e2e2e2"/></svg>
<div class="t" style="left:1716.5px;top:367.3px;font-size:15px;color:#e8e8e8;">内阴影</div>
<svg class="i" style="left:1694px;top:395.5px;" width="16" height="10" viewBox="0 0 16 10"><path d="M0.5 5C4 -0.8 12 -0.8 15.5 5C12 10.8 4 10.8 0.5 5Z" fill="#e2e2e2"/><circle cx="8" cy="5" r="3.2" fill="#474747"/><circle cx="8.8" cy="3.9" r="0.8" fill="#e2e2e2"/></svg>
<div class="t" style="left:1716.5px;top:390.3px;font-size:15px;color:#e8e8e8;">内发光</div>
<svg class="i" style="left:1694px;top:419.5px;" width="16" height="10" viewBox="0 0 16 10"><path d="M0.5 5C4 -0.8 12 -0.8 15.5 5C12 10.8 4 10.8 0.5 5Z" fill="#e2e2e2"/><circle cx="8" cy="5" r="3.2" fill="#474747"/><circle cx="8.8" cy="3.9" r="0.8" fill="#e2e2e2"/></svg>
<div class="t" style="left:1716.5px;top:414.3px;font-size:15px;color:#e8e8e8;">光泽</div>
<svg class="i" style="left:1694px;top:443.9px;" width="16" height="10" viewBox="0 0 16 10"><path d="M0.5 5C4 -0.8 12 -0.8 15.5 5C12 10.8 4 10.8 0.5 5Z" fill="#e2e2e2"/><circle cx="8" cy="5" r="3.2" fill="#474747"/><circle cx="8.8" cy="3.9" r="0.8" fill="#e2e2e2"/></svg>
<div class="t" style="left:1716.5px;top:438.7px;font-size:15px;color:#e8e8e8;">颜色叠加</div>
<svg class="i" style="left:1694px;top:467.7px;" width="16" height="10" viewBox="0 0 16 10"><path d="M0.5 5C4 -0.8 12 -0.8 15.5 5C12 10.8 4 10.8 0.5 5Z" fill="#e2e2e2"/><circle cx="8" cy="5" r="3.2" fill="#474747"/><circle cx="8.8" cy="3.9" r="0.8" fill="#e2e2e2"/></svg>
<div class="t" style="left:1716.5px;top:462.5px;font-size:15px;color:#e8e8e8;">外发光</div>
<svg class="i" style="left:1694px;top:490.8px;" width="16" height="10" viewBox="0 0 16 10"><path d="M0.5 5C4 -0.8 12 -0.8 15.5 5C12 10.8 4 10.8 0.5 5Z" fill="#e2e2e2"/><circle cx="8" cy="5" r="3.2" fill="#474747"/><circle cx="8.8" cy="3.9" r="0.8" fill="#e2e2e2"/></svg>
<div class="t" style="left:1716.5px;top:485.6px;font-size:15px;color:#e8e8e8;">投影</div>
<div class="a" style="left:1610px;top:506.5px;width:310px;height:1.5px;background:#474747;"></div>
<div class="a" style="left:1647px;top:508px;width:1px;height:51px;background:#4a4a4a;"></div>
<svg class="i" style="left:1620.5px;top:528.6px;" width="16" height="10" viewBox="0 0 16 10"><path d="M0.5 5C4 -0.8 12 -0.8 15.5 5C12 10.8 4 10.8 0.5 5Z" fill="#e2e2e2"/><circle cx="8" cy="5" r="3.2" fill="#474747"/><circle cx="8.8" cy="3.9" r="0.8" fill="#e2e2e2"/></svg>
<div class="a" style="left:1652px;top:514px;width:40px;height:40px;background:#535353;border:1px solid #2a2a2a"></div>
<div class="a" style="left:1661px;top:522px;width:23px;height:24px;background:radial-gradient(circle 26px at -0.7px 10.5px, #cfe2f3 0%, #e4d8ec 18%, #f1d2e6 29%, #f4d3e2 47%, #f7dfdd 54.5%, #f8f1d9 63.6%, #e3eedf 78%, #c6e3f3 93.6%, #c4e2f3 100%)"></div>
<div class="t" style="left:1706px;top:525px;font-size:15px;color:#e8e8e8;">背景</div>
<div class="a" style="left:1610px;top:558.5px;width:310px;height:1.5px;background:#474747;"></div>
<div class="a" style="left:1610px;top:560px;width:310px;height:377.5px;background:#4c4c4c;"></div>
<div class="a" style="left:1610px;top:937px;width:310px;height:1.2px;background:#3f3f3f;"></div>
<div class="a" style="left:1610px;top:938.2px;width:310px;height:31.8px;background:#535353;"></div>
<svg class="i" style="left:1728px;top:947px;" width="20" height="14" viewBox="0 0 20 14"><g fill="none" stroke="#cfcfcf" stroke-width="1.3"><rect x="0.8" y="2" width="9" height="8" rx="4"/><rect x="8" y="2" width="9" height="8" rx="4"/></g></svg>
<div class="t" style="left:1763px;top:945px;font-size:13px;color:#d8d8d8;font-weight:bold"><i>fx</i></div>
<svg class="i" style="left:1797px;top:947px;" width="16" height="12" viewBox="0 0 16 12"><path fill-rule="evenodd" d="M0 0H15.5V11.5H0ZM7.75 2.2A3.6 3.6 0 1 0 7.75 9.4A3.6 3.6 0 1 0 7.75 2.2Z" fill="#d8d8d8"/></svg>
<svg class="i" style="left:1832px;top:946px;" width="17" height="17" viewBox="0 0 17 17"><circle cx="6.5" cy="6.5" r="5.6" fill="none" stroke="#d8d8d8" stroke-width="1.3"/><path d="M10.5 2.5A5.6 5.6 0 0 1 2.5 10.5Z" fill="#d8d8d8"/><path d="M13 12.5H17L15 14.5Z" fill="#e0e0e0"/></svg>
<svg class="i" style="left:1864px;top:946px;" width="14" height="14" viewBox="0 0 14 14"><path d="M0.7 2H5L6.5 3.5H13V12.5H0.7Z" fill="none" stroke="#d8d8d8" stroke-width="1.2"/></svg>
<svg class="i" style="left:1898.5px;top:946.5px;" width="14" height="14" viewBox="0 0 14 14"><rect x="0.6" y="0.6" width="12.5" height="12.5" fill="none" stroke="#d8d8d8" stroke-width="1.2"/><path d="M6.9 3.5V10.3M3.5 6.9H10.3" stroke="#e0e0e0" stroke-width="1.4"/></svg>
<div class="a" style="left:1610px;top:970px;width:310px;height:1px;background:#3f3f3f;"></div>
<div class="a" style="left:1610px;top:971px;width:310px;height:9px;background:#4a4a4a;"></div>
<div class="a" style="left:1796px;top:972.5px;width:1px;height:5px;background:#3c3c3c;"></div>
<div class="a" style="left:1798px;top:972.5px;width:1px;height:5px;background:#3c3c3c;"></div>
<div class="a" style="left:1800px;top:972.5px;width:1px;height:5px;background:#3c3c3c;"></div>
<div class="a" style="left:1802px;top:972.5px;width:1px;height:5px;background:#3c3c3c;"></div>
<div class="a" style="left:1804px;top:972.5px;width:1px;height:5px;background:#3c3c3c;"></div>
<div class="a" style="left:1806px;top:972.5px;width:1px;height:5px;background:#3c3c3c;"></div>
<div class="a" style="left:1808px;top:972.5px;width:1px;height:5px;background:#3c3c3c;"></div>
<div class="a" style="left:1899px;top:980px;width:21px;height:28px;background:#4a4a4a;"></div>
<svg class="i" style="left:1906.5px;top:993px;" width="7.5" height="4.5" viewBox="0 0 7.5 4.5"><path d="M0.5 0.5L3.75 4.0L7.0 0.5" fill="none" stroke="#9a9a9a" stroke-width="1.1"/></svg>
<div class="a" style="left:1653.5px;top:311.3px;width:165px;height:195.3px;border:4.5px solid #fa1b12;border-radius:6px"></div>
<div class="t" style="left:1454px;top:946px;font-size:47px;color:#000000;-webkit-text-stroke:2.6px #000000;filter:blur(0.6px)">头条</div>
<div class="t" style="left:1451px;top:943px;font-size:47px;color:#ffffff;-webkit-text-stroke:2.6px #ffffff">头条</div>
<div class="t" style="left:1556px;top:945px;font-size:49px;color:#ffffff;text-shadow:3px 3px 1px #000,2px 2px 0 #000">@知识分享991</div>
</body></html>
